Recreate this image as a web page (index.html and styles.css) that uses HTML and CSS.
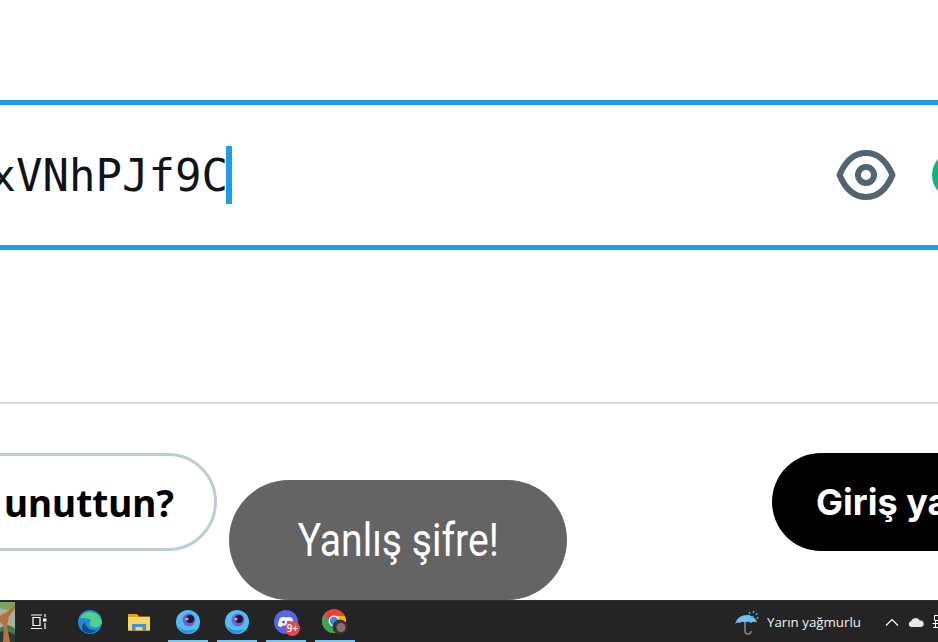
FILE: index.html
```html
<!DOCTYPE html>
<html lang="tr">
<head>
  <meta charset="UTF-8" />
  <meta name="viewport" content="width=device-width, initial-scale=1" />
  <title>Giriş yap</title>
  <link rel="stylesheet" href="styles.css">
</head>
<body>
  <main class="login">
    <div class="field">
      <div class="field-value"><span class="field-text">xVNhPJf9C</span></div>
      <span class="caret"></span>
      <svg class="eye" viewBox="0 0 60 50" fill="none" stroke="#536471" stroke-width="6">
        <path d="M3.500 25C9 12 18 3 30 3S51 12 56.500 25C51 38 42 47 30 47S9 38 3.500 25Z" stroke-linejoin="round"/>
        <circle cx="30" cy="25" r="8"/>
      </svg>
      <span class="strength"></span>
    </div>
    <div class="divider"></div>
    <div class="actions">
      <button class="btn btn-forgot">Şifreni mi unuttun?</button>
      <button class="btn btn-login">Giriş yap</button>
    </div>
    <div class="toast"><span class="toast-text">Yanlış şifre!</span></div>
  </main>

  <footer class="taskbar">
    <div class="thumb">
      <svg viewBox="0 0 15 40" width="15" height="40">
        <rect width="15" height="40" fill="#9fb3a0"/>
        <path d="M0 26Q8 20 15 27V40H0Z" fill="#3f7a4a"/>
        <path d="M0 30Q7 27 15 33V40H0Z" fill="#2d3a34"/>
        <path d="M0 14L8 9 15 2V7L9 14 7 24 10 40H3L4 24 0 20Z" fill="#b5713f"/>
        <path d="M0 0H15V3L8 8 0 6Z" fill="#7fa05f"/>
      </svg>
    </div>
    <div class="task-view">
      <svg viewBox="0 0 16 16" width="16" height="16" fill="none" stroke="#fff" stroke-width="1.200">
        <path d="M0 1H11M2 3.500H9V11.500H2ZM0 14.500H11M14 0V3M14 9V15"/>
        <rect x="12" y="4.500" width="3.500" height="3" fill="#fff" stroke="none"/>
      </svg>
    </div>
    <div class="task-item">
      <svg viewBox="0 0 24 24" width="24" height="24">
        <circle cx="12" cy="12" r="12" fill="#1b8fd6"/>
        <path d="M2 8C5 1 20 -2 23.800 12 24 16 19 18 15 17 11 16 11 12 13 10 9 8 4 8 2 8Z" fill="#4fd08c"/>
        <path d="M7 13C8 18 13 21 19 20 15 24 9 24 5 21 3 18 4 13 7 13Z" fill="#0c4f94"/>
      </svg>
    </div>
    <div class="task-item">
      <svg viewBox="0 0 22 18" width="22" height="18">
        <path d="M0 1H9L11 3.500H22V17.500H0Z" fill="#e0a41c"/>
        <rect y="4" width="22" height="13.500" fill="#fbd666"/>
        <path d="M4 17.500V11H18V17.500H14.500V14H7.500V17.500Z" fill="#3f92d2"/>
      </svg>
    </div>
    <div class="task-item is-open">
      <svg viewBox="0 0 24 24" width="24" height="24">
        <circle cx="12" cy="12" r="12" fill="#4cc0f2"/>
        <path d="M2 16Q8 23 20 19 15 24 9 23.500 4 22 2 16Z" fill="#2f8fd8"/>
        <circle cx="13" cy="10" r="6.500" fill="#7c5bd0"/>
        <circle cx="14" cy="9" r="4" fill="#1d1a2e"/>
        <circle cx="11" cy="9" r="1.500" fill="#b9a6ee"/>
      </svg>
    </div>
    <div class="task-item is-open">
      <svg viewBox="0 0 24 24" width="24" height="24">
        <circle cx="12" cy="12" r="12" fill="#4cc0f2"/>
        <path d="M2 16Q8 23 20 19 15 24 9 23.500 4 22 2 16Z" fill="#2f8fd8"/>
        <circle cx="13" cy="10" r="6.500" fill="#7c5bd0"/>
        <circle cx="14" cy="9" r="4" fill="#1d1a2e"/>
        <circle cx="11" cy="9" r="1.500" fill="#b9a6ee"/>
      </svg>
    </div>
    <div class="task-item is-open">
      <svg viewBox="0 0 24 24" width="24" height="24">
        <circle cx="12" cy="12" r="12" fill="#5865f2"/>
        <path d="M6 8Q9 6.500 12 7.500 15 6.500 18 8 20 11.500 20 16L16.500 17 15.500 15.500H8.500L7.500 17 4 16Q4 11.500 6 8Z" fill="#fff"/>
        <circle cx="9.500" cy="12" r="1.600" fill="#5865f2"/>
        <circle cx="14.500" cy="12" r="1.600" fill="#5865f2"/>
      </svg>
      <span class="badge">9+</span>
    </div>
    <div class="task-item is-open">
      <svg viewBox="0 0 26 26" width="26" height="26">
        <circle cx="12" cy="12" r="12" fill="#ea4335"/>
        <path d="M1.600 6A12 12 0 0 0 12 24L18 13 12 17 7 12Z" fill="#34a853"/>
        <path d="M12 7H22.800A12 12 0 0 1 12 24L16.500 14Z" fill="#fbbc05"/>
        <circle cx="12" cy="12" r="5.400" fill="#fff"/>
        <circle cx="12" cy="12" r="4.200" fill="#4285f4"/>
        <circle cx="18" cy="18" r="7.500" fill="#3a3338"/>
        <circle cx="19" cy="18.500" r="4.500" fill="#8f6f68"/>
      </svg>
    </div>
    <div class="tray">
      <svg viewBox="0 0 26 26" width="26" height="26">
        <path d="M1 15Q4 5 15 6 22 8 23 14 20 11.500 17 14 14 11.500 11 14 8 11.500 6 14 3 12.500 1 15Z" fill="#6fc0f0"/>
        <path d="M11 14V22Q11 25 14 25T17 22" fill="none" stroke="#8a8a8a" stroke-width="1.500"/>
        <path d="M16 3L15 5M20 2L19 4M23 4L22 6M19 7L18 9M24 8L23 10" stroke="#4fa6e6" stroke-width="1.500"/>
      </svg>
      <span class="weather">Yarın yağmurlu</span>
      <svg class="chevron" viewBox="0 0 14 8" width="14" height="8" fill="none" stroke="#fff" stroke-width="1.200">
        <path d="M1 7.500L7 1.500 13 7.500"/>
      </svg>
      <svg class="cloud" viewBox="0 0 16 10" width="16" height="10">
        <path d="M3 10A3 3 0 0 1 3 4.200 5 5 0 0 1 12 3.600 3.200 3.200 0 0 1 13 10Z" fill="#e6e6e6"/>
      </svg>
      <svg class="net" viewBox="0 0 12 14" width="12" height="14" fill="none" stroke="#fff" stroke-width="1">
        <path d="M2.500 .5H8.500V5.500H2.500ZM.5 8.500H6.500M3.500 5.500V12.500M1 12.500H6"/>
      </svg>
    </div>
  </footer>
</body>
</html>
```

FILE: styles.css
```css
html, body {
  margin: 0;
  padding: 0;
  height: 100%;
  background: #fff;
  overflow: hidden;
}
body {
  display: flex;
  flex-direction: column;
  width: 938px;
  height: 642px;
  font-family: 'Inter', 'Liberation Sans', sans-serif;
}
.login {
  flex: 1;
  position: relative;
  padding-top: 100px;
  box-sizing: border-box;
}
.field {
  display: flex;
  align-items: center;
  height: 150px;
  box-sizing: border-box;
  border-top: 5px solid #1d9bf0;
  border-bottom: 5px solid #1d9bf0;
}
.field-value {
  display: flex;
  justify-content: flex-end;
  flex: none;
  width: 228px;
  overflow: hidden;
}
.field-text {
  flex: none;
  padding-top: 2px;
  font-family: 'DejaVu Sans Mono', 'Liberation Mono', monospace;
  font-size: 44px;
  line-height: 58px;
  color: #0f1419;
}
.caret {
  flex: none;
  width: 6px;
  height: 58px;
  margin-left: -2px;
  background: #1d9bf0;
}
.eye {
  flex: none;
  width: 60px;
  height: 50px;
  margin-left: 604px;
}
.strength {
  flex: none;
  width: 48px;
  height: 48px;
  margin-left: 36px;
  border-radius: 50%;
  background: #00ba7c;
}
.divider {
  height: 2px;
  margin-top: 152px;
  background: #cfd9de;
}
.actions {
  display: flex;
  margin-top: 49px;
}
.btn {
  flex: none;
  height: 98px;
  border-radius: 49px;
  font-family: inherit;
  font-size: 36px;
  font-weight: 700;
  white-space: nowrap;
}
.btn-forgot {
  width: 560px;
  margin-left: -343px;
  padding: 0 40px;
  text-align: right;
  background: #fff;
  border: 3px solid #bccdd6;
  color: #000;
  font-family: 'Noto Sans', sans-serif;
  font-size: 37px;
}
.btn-login {
  width: 320px;
  margin-left: 555px;
  padding: 0 44px;
  text-align: left;
  background: #000;
  border: none;
  color: #fff;
}
.toast {
  position: absolute;
  left: 229px;
  top: 480px;
  display: flex;
  justify-content: center;
  align-items: center;
  width: 338px;
  height: 120px;
  border-radius: 60px;
  background: #646464;
}
.toast-text {
  display: inline-block;
  transform: scaleX(0.85);
  font-family: 'Roboto', sans-serif;
  font-size: 46px;
  white-space: nowrap;
  color: #fff;
}
.taskbar {
  display: flex;
  align-items: center;
  flex: none;
  height: 42px;
  background: #242424;
  border-top: 1px solid #2e2e2e;
  box-sizing: border-box;
}
.thumb {
  flex: none;
  display: flex;
  width: 15px;
  height: 41px;
  align-items: flex-end;
}
.task-view {
  flex: none;
  display: flex;
  justify-content: center;
  width: 48px;
  margin-right: 2px;
}
.task-item {
  flex: none;
  position: relative;
  display: flex;
  justify-content: center;
  align-items: center;
  width: 49px;
  height: 41px;
  box-sizing: border-box;
}
.task-item.is-open::after {
  content: '';
  position: absolute;
  left: 5px;
  right: 4px;
  bottom: 0;
  height: 2px;
  background: #76c5f0;
}
.badge {
  position: absolute;
  left: 24px;
  top: 20px;
  width: 15px;
  height: 15px;
  border-radius: 50%;
  background: #e5484d;
  color: #fff;
  font-family: 'Open Sans', sans-serif;
  font-size: 10px;
  font-weight: 600;
  line-height: 15px;
  text-align: center;
}
.tray {
  flex: none;
  display: flex;
  align-items: center;
  margin-left: 375px;
}
.weather {
  margin-left: 7px;
  font-family: 'Open Sans', sans-serif;
  font-size: 13.3px;
  white-space: nowrap;
  color: #f2f2f2;
}
.chevron {
  flex: none;
  margin-left: 24px;
}
.cloud {
  flex: none;
  margin-left: 9px;
}
.net {
  flex: none;
  margin-left: 8px;
}
```
